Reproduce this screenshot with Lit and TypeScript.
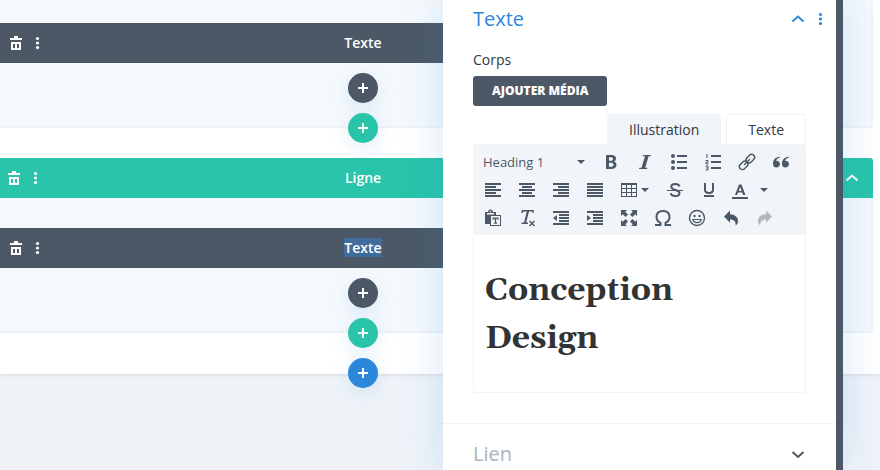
import { LitElement, html, css, svg, nothing } from "lit";
import { customElement } from "lit/decorators.js";

const shapes: Record<string, unknown> = {
  trash: svg`<path fill-rule="evenodd" d="M4 5h4V3h4v2h4v2H4zM5 9h10v8H5zM7 11v4h2v-4zM11 11v4h2v-4z"/>`,
  dots: svg`<circle cx="9.500" cy="5.500" r="1.600"/><circle cx="9.500" cy="10" r="1.600"/><circle cx="9.500" cy="14.500" r="1.600"/>`,
  plus: svg`<path d="M9 5h2v4h4v2h-4v4H9v-4H5V9h4z"/>`,
  up: svg`<path class="line" d="M4.500 12.500l5.500-5 5.500 5"/>`,
  down: svg`<path class="line" d="M4.500 8l5.500 5 5.500-5"/>`,
  bold: svg`<path fill-rule="evenodd" d="M5 3h5.500c3 0 4.500 1.300 4.500 3.500 0 1.500-.8 2.500-2 3 1.600.4 2.500 1.600 2.500 3.300 0 2.700-1.800 4.200-5 4.200H5zM8 5.200v3.500h2c1.300 0 2-.6 2-1.800s-.7-1.700-2-1.700zM8 10.800v4h2.300c1.400 0 2.200-.7 2.200-2s-.8-2-2.200-2z"/>`,
  italic: svg`<path d="M8 3h8l-.3 1.200h-2.100L10.200 15.800h2.200L12 17H4l.3-1.200h2.200L10 4.200H7.700z"/>`,
  ul: svg`<circle cx="4" cy="4" r="2"/><circle cx="4" cy="10" r="2"/><circle cx="4" cy="16" r="2"/><path d="M8 3h10v2H8zM8 9h10v2H8zM8 15h10v2H8z"/>`,
  ol: svg`<path d="M8 3h10v2H8zM8 9h10v2H8zM8 15h10v2H8z"/><path class="thin" d="M3 3l1-.5V6M2.500 8.500H5v1.700H3v1.800h2.500M2.500 14H5v4H2.500M3 16h2"/>`,
  link: svg`<g transform="rotate(-45 10 10)"><rect class="mid" x="0.500" y="7" width="9.500" height="6" rx="3"/><rect class="mid" x="10" y="7" width="9.500" height="6" rx="3"/><path class="mid" d="M6 10h8"/></g>`,
  quote: svg`<path d="M9 4.700C4.500 5 2 7.500 2 11.500c0 2.500 1.200 4 3.300 4C7.400 15.500 9 14 9 12c0-2-1.400-3.300-3.400-3.300h-.5C5.700 7 7 5.900 9 5.700zM18 4.700c-4.500.3-7 2.800-7 6.800 0 2.500 1.200 4 3.300 4 2.100 0 3.700-1.500 3.700-3.500 0-2-1.400-3.300-3.400-3.300h-.5c.6-1.700 1.900-2.800 3.900-3z"/>`,
  left: svg`<path d="M2 3h16v2H2zM2 6h11v2H2zM2 9h16v2H2zM2 12h11v2H2zM2 15h16v2H2z"/>`,
  center: svg`<path d="M2 3h16v2H2zM5 6h10v2H5zM2 9h16v2H2zM5 12h10v2H5zM2 15h16v2H2z"/>`,
  right: svg`<path d="M2 3h16v2H2zM7 6h11v2H7zM2 9h16v2H2zM7 12h11v2H7zM2 15h16v2H2z"/>`,
  justify: svg`<path d="M2 3h16v2H2zM2 6h16v2H2zM2 9h16v2H2zM2 12h16v2H2zM2 15h16v2H2z"/>`,
  table: svg`<path fill-rule="evenodd" d="M2 3h16v14H2zM3 5v3h4V5zM8 5v3h4V5zM13 5v3h4V5zM3 9v3h4V9zM8 9v3h4V9zM13 9v3h4V9zM3 13v3h4v-3zM8 13v3h4v-3zM13 13v3h4v-3z"/>`,
  caret: svg`<path d="M6 8h8l-4 4z"/>`,
  strike: svg`<path class="bold" d="M14.500 6.500C14 4.700 12.300 4 10.200 4 7.800 4 6.300 5 6.300 6.700 6.300 11 14.500 9 14.500 13.200c0 1.800-1.800 2.800-4.300 2.800-2.400 0-4.200-1-4.500-2.800"/><path d="M2 10h16v1H2z"/>`,
  underline: svg`<path class="bold" d="M6 3v6.500c0 2.500 1.500 3.500 4 3.500s4-1 4-3.500V3"/><path d="M5 15h10v2H5z"/>`,
  color: svg`<path fill-rule="evenodd" d="M9 4.500h2.500L15.500 15H13l-.8-2.400H8L7.200 15H5zM10.200 7L8.700 11h2.900z"/><path d="M2 17h16v2H2z"/>`,
  paste: svg`<path fill-rule="evenodd" d="M2 4h3c0-1.500 1-2.500 2.500-2.500S10 2.500 10 4h3v4H7v8H2zM6.500 4h2c0-1.200-2-1.200-2 0zM4 5v1.500h7V5z"/><path fill-rule="evenodd" d="M7 7h11v11H7zM8 8v9h9V8zM9.500 9.500h6V12h-1v-1.300h-1.300v4h1v1.100h-3.400v-1.100h1v-4h-1.300V12h-1z"/>`,
  clear: svg`<path d="M5 2h12l-.6 3h-1.200l.1-1.600h-3.300L9.200 14.500H11V16H4.500v-1.500H7l2.800-11.100H6.500L5.500 5H4.200z"/><path class="mid" d="M12.500 13l5 5M17.500 13l-5 5"/>`,
  outdent: svg`<path d="M2 3h16v2H2zM8 6h10v2H8zM8 9h10v2H8zM8 12h10v2H8zM2 15h16v2H2zM6 7v6l-4-3z"/>`,
  indent: svg`<path d="M2 3h16v2H2zM8 6h10v2H8zM8 9h10v2H8zM8 12h10v2H8zM2 15h16v2H2zM2 7v6l4-3z"/>`,
  full: svg`<path d="M2 2h6L6.200 3.800 9 6.600 6.600 9 3.800 6.200 2 8zM18 2v6l-1.800-1.800L13.400 9 11 6.600l2.800-2.800L12 2zM2 18v-6l1.800 1.800L6.600 11 9 13.400l-2.800 2.800L8 18zM18 18h-6l1.800-1.800-2.800-2.800 2.400-2.400 2.800 2.800L18 12z"/>`,
  omega: svg`<path class="bold" d="M2 17h5.500v-2C5 13.700 3.500 11.700 3.500 9c0-3.700 2.500-6 6.500-6s6.500 2.300 6.500 6c0 2.700-1.500 4.700-4 6v2H18"/>`,
  smile: svg`<circle class="mid" cx="10" cy="10" r="7.500"/><circle cx="7.500" cy="8" r="1.200"/><circle cx="12.500" cy="8" r="1.200"/><path d="M5 11h10c-.3 2.600-2.200 4.200-5 4.200S5.300 13.600 5 11zm1.500 1c.7 1.300 1.900 2 3.500 2s2.800-.7 3.500-2z"/>`,
  undo: svg`<path d="M9 2.500v3.800c5 0 8 3 8 6.700 0 1.700-.6 3.200-2.300 4.500.3-4-1.700-5.900-5.700-6v3.300L3 8.500z"/>`,
  redo: svg`<path d="M11 2.500v3.800C6 6.300 3 9.300 3 13c0 1.700.6 3.200 2.300 4.500-.3-4 1.700-5.900 5.700-6v3.300l6-6.300z"/>`,
};

const icon = (name: string) =>
  html`<svg class="icon" viewBox="0 0 20 20" width="20" height="20" aria-hidden="true">${shapes[name]}</svg>`;

const iconStyles = css`
  * {
    box-sizing: border-box;
  }
  button,
  select {
    margin: 0;
    padding: 0;
    border: 0;
    background: none;
    color: inherit;
    font: inherit;
    cursor: pointer;
  }
  .icon {
    display: block;
    flex: none;
    fill: currentColor;
  }
  .line,
  .thin,
  .mid,
  .bold {
    fill: none;
    stroke: currentColor;
  }
  .line,
  .bold {
    stroke-width: 2;
  }
  .thin {
    stroke-width: 1;
  }
  .mid {
    stroke-width: 1.4;
  }
`;

@customElement("text-toolbar")
class TextToolbar extends LitElement {
  static styles = [
    iconStyles,
    css`
      :host {
        display: block;
        padding: 4px 2px 3px;
        background: #f1f5f9;
        color: #4c5866;
      }
      .row {
        display: flex;
        height: 28px;
      }
      .tool {
        display: flex;
        align-items: center;
        justify-content: center;
        width: 34px;
      }
      .split {
        justify-content: flex-start;
        width: 46px;
        padding-left: 7px;
      }
      .split .icon + .icon {
        margin-left: -4px;
      }
      .wide {
        padding-left: 4px;
      }
      .wide .icon + .icon {
        margin-left: 4px;
      }
      .off {
        color: #b0b8be;
      }
      .format {
        display: flex;
        align-items: center;
        width: 118px;
        padding-left: 7px;
      }
      .format select {
        flex: 1;
        min-width: 0;
        appearance: none;
        font-size: 13px;
        font-weight: 500;
        line-height: 20px;
        color: #4c5866;
      }
      .format .icon {
        margin-right: 3px;
        pointer-events: none;
      }
    `,
  ];

  tool(name: string, label: string, kind = "") {
    return html`<button class="tool ${kind}" type="button" aria-label=${label} ?disabled=${kind === "off"}>
      ${icon(name)}${kind.includes("split") ? icon("caret") : nothing}
    </button>`;
  }

  render() {
    return html`
      <div class="row">
        <label class="format">
          <select aria-label="Format">
            <option>Heading 1</option>
            <option>Heading 2</option>
          </select>
          ${icon("caret")}
        </label>
        ${this.tool("bold", "Gras")} ${this.tool("italic", "Italique")} ${this.tool("ul", "Liste à puces")}
        ${this.tool("ol", "Liste numérotée")} ${this.tool("link", "Lien")} ${this.tool("quote", "Citation")}
      </div>
      <div class="row">
        ${this.tool("left", "Aligner à gauche")} ${this.tool("center", "Centrer")}
        ${this.tool("right", "Aligner à droite")} ${this.tool("justify", "Justifier")}
        ${this.tool("table", "Tableau", "split")} ${this.tool("strike", "Barré")}
        ${this.tool("underline", "Souligné")} ${this.tool("color", "Couleur du texte", "split wide")}
      </div>
      <div class="row">
        ${this.tool("paste", "Coller en texte")} ${this.tool("clear", "Effacer la mise en forme")}
        ${this.tool("outdent", "Diminuer le retrait")} ${this.tool("indent", "Augmenter le retrait")}
        ${this.tool("full", "Plein écran")} ${this.tool("omega", "Caractères spéciaux")}
        ${this.tool("smile", "Émoticônes")} ${this.tool("undo", "Annuler")} ${this.tool("redo", "Rétablir", "off")}
      </div>
    `;
  }
}

@customElement("settings-panel")
class SettingsPanel extends LitElement {
  static styles = [
    iconStyles,
    css`
      :host {
        display: block;
        background: #fff;
        border-right: 7px solid #4c5866;
        box-shadow: 0 0 40px rgba(43, 135, 218, 0.2);
        color: #32373c;
        font-size: 14px;
        line-height: 20px;
      }
      .group {
        padding: 4px 30px 30px;
      }
      .group + .group {
        padding-top: 15px;
        border-top: 1px solid #f1f5f9;
      }
      .head {
        display: flex;
        align-items: center;
        height: 30px;
        color: #2b87da;
      }
      h2 {
        flex: 1;
        margin: 0;
        font-size: 20px;
        font-weight: 400;
        line-height: 30px;
      }
      .head button {
        flex: none;
        width: 20px;
      }
      .head .fold {
        margin-right: -2px;
      }
      .more {
        margin: 0 -25px 0 5px;
      }
      .closed {
        color: #4c5866;
      }
      .closed h2 {
        color: #a9b5bd;
      }
      .field {
        display: block;
        margin-top: 16px;
        font-weight: 500;
      }
      .media {
        display: block;
        height: 30px;
        margin-top: 6px;
        padding: 0 19px;
        border-radius: 3px;
        background: #4c5866;
        color: #fff;
        font-size: 12px;
        font-weight: 800;
      }
      .tabs {
        display: flex;
        justify-content: flex-end;
        gap: 5px;
        margin-top: 8px;
      }
      .tab {
        height: 30px;
        padding: 0 21px;
        border: 1px solid #f1f5f9;
        border-bottom: 0;
        border-radius: 3px 3px 0 0;
        font-weight: 500;
      }
      .current {
        background: #f1f5f9;
      }
      .editor {
        overflow: hidden;
        border: 1px solid #f1f5f9;
        border-top: 0;
        border-radius: 3px;
      }
      .page {
        padding: 32px 11px 29px;
      }
      h1 {
        max-width: 240px;
        margin: 0;
        color: #333;
        font: bold 32px/48px Gelasio, "DejaVu Serif Condensed", "DejaVu Serif", serif;
      }
    `,
  ];

  render() {
    return html`
      <section class="group">
        <div class="head">
          <h2>Texte</h2>
          <button class="fold" type="button" aria-label="Replier">${icon("up")}</button>
          <button class="more" type="button" aria-label="Options">${icon("dots")}</button>
        </div>
        <span class="field" id="body-label">Corps</span>
        <button class="media" type="button">AJOUTER MÉDIA</button>
        <div class="tabs" role="tablist">
          <button class="tab current" type="button" role="tab" aria-selected="true">Illustration</button>
          <button class="tab" type="button" role="tab" aria-selected="false">Texte</button>
        </div>
        <div class="editor">
          <text-toolbar></text-toolbar>
          <div class="page" contenteditable="true" role="textbox" aria-labelledby="body-label">
            <h1>Conception Design</h1>
          </div>
        </div>
      </section>
      <section class="group">
        <div class="head closed">
          <h2>Lien</h2>
          <button class="fold" type="button" aria-label="Déplier">${icon("down")}</button>
        </div>
      </section>
    `;
  }
}

@customElement("app-root")
class AppRoot extends LitElement {
  static styles = [
    iconStyles,
    css`
      :host {
        display: block;
        position: relative;
        min-height: 100vh;
        overflow: hidden;
        background: #eff3f8;
        font-family: "Open Sans", sans-serif;
      }
      .section {
        display: flow-root;
        padding-right: 7px;
        background: #fff;
        box-shadow: 0 1px 3px rgba(76, 88, 102, 0.15);
      }
      .body {
        padding-top: 30px;
        background: #f5f9fc;
        border: solid #eef3f8;
        border-width: 0 2px 2px 0;
        border-radius: 0 0 3px 0;
      }
      .first {
        padding-top: 23px;
        margin-bottom: 30px;
      }
      .bar {
        display: grid;
        grid-template-columns: 1fr auto 1fr 147px;
        align-items: center;
        height: 40px;
        background: #29c4a9;
        border-radius: 0 3px 0 0;
        color: #fff;
        font-size: 14px;
        font-weight: 600;
        line-height: 19px;
      }
      .module {
        grid-template-columns: 1fr auto 1fr 85px;
        margin-right: 60px;
        background: #4c5866;
      }
      .name {
        margin-bottom: 2px;
      }
      .actions {
        display: flex;
        gap: 2px;
        padding-left: 4px;
      }
      .module .actions {
        padding-left: 6px;
      }
      .toggle {
        grid-column: 4;
        justify-self: end;
        margin-right: 11px;
      }
      .picked {
        background: #3f6c9b;
      }
      .adders {
        display: grid;
        justify-items: center;
        gap: 10px;
        padding: 10px 145px 0 0;
        margin-bottom: -17px;
      }
      .last {
        padding: 25px 147px 0 0;
        margin-bottom: -14px;
      }
      .add {
        position: relative;
        display: grid;
        place-items: center;
        width: 30px;
        height: 30px;
        border-radius: 50%;
        background: #29c4a9;
        color: #fff;
        box-shadow: 0 5px 20px rgba(43, 135, 218, 0.15);
      }
      .dark {
        background: #4c5866;
      }
      .blue {
        background: #2b87da;
      }
      .panel {
        position: absolute;
        top: 0;
        right: 37px;
        bottom: 0;
        width: 400px;
      }
    `,
  ];

  actions() {
    return html`<div class="actions">
      <button type="button" aria-label="Supprimer">${icon("trash")}</button>
      <button type="button" aria-label="Plus d’options">${icon("dots")}</button>
    </div>`;
  }

  add(kind: string, label: string) {
    return html`<button class="add ${kind}" type="button" aria-label=${label}>${icon("plus")}</button>`;
  }

  module(kind: string) {
    return html`
      <div class="bar module">${this.actions()}<span class="name ${kind}">Texte</span></div>
      <div class="adders">${this.add("dark", "Ajouter un module")}${this.add("", "Ajouter une ligne")}</div>
    `;
  }

  render() {
    return html`
      <main class="section">
        <div class="body first">${this.module("")}</div>
        <div class="bar">
          ${this.actions()}<span class="name">Ligne</span>
          <button class="toggle" type="button" aria-label="Replier la ligne">${icon("up")}</button>
        </div>
        <div class="body">${this.module("picked")}</div>
        <div class="adders last">${this.add("blue", "Ajouter une section")}</div>
      </main>
      <settings-panel class="panel"></settings-panel>
    `;
  }
}
